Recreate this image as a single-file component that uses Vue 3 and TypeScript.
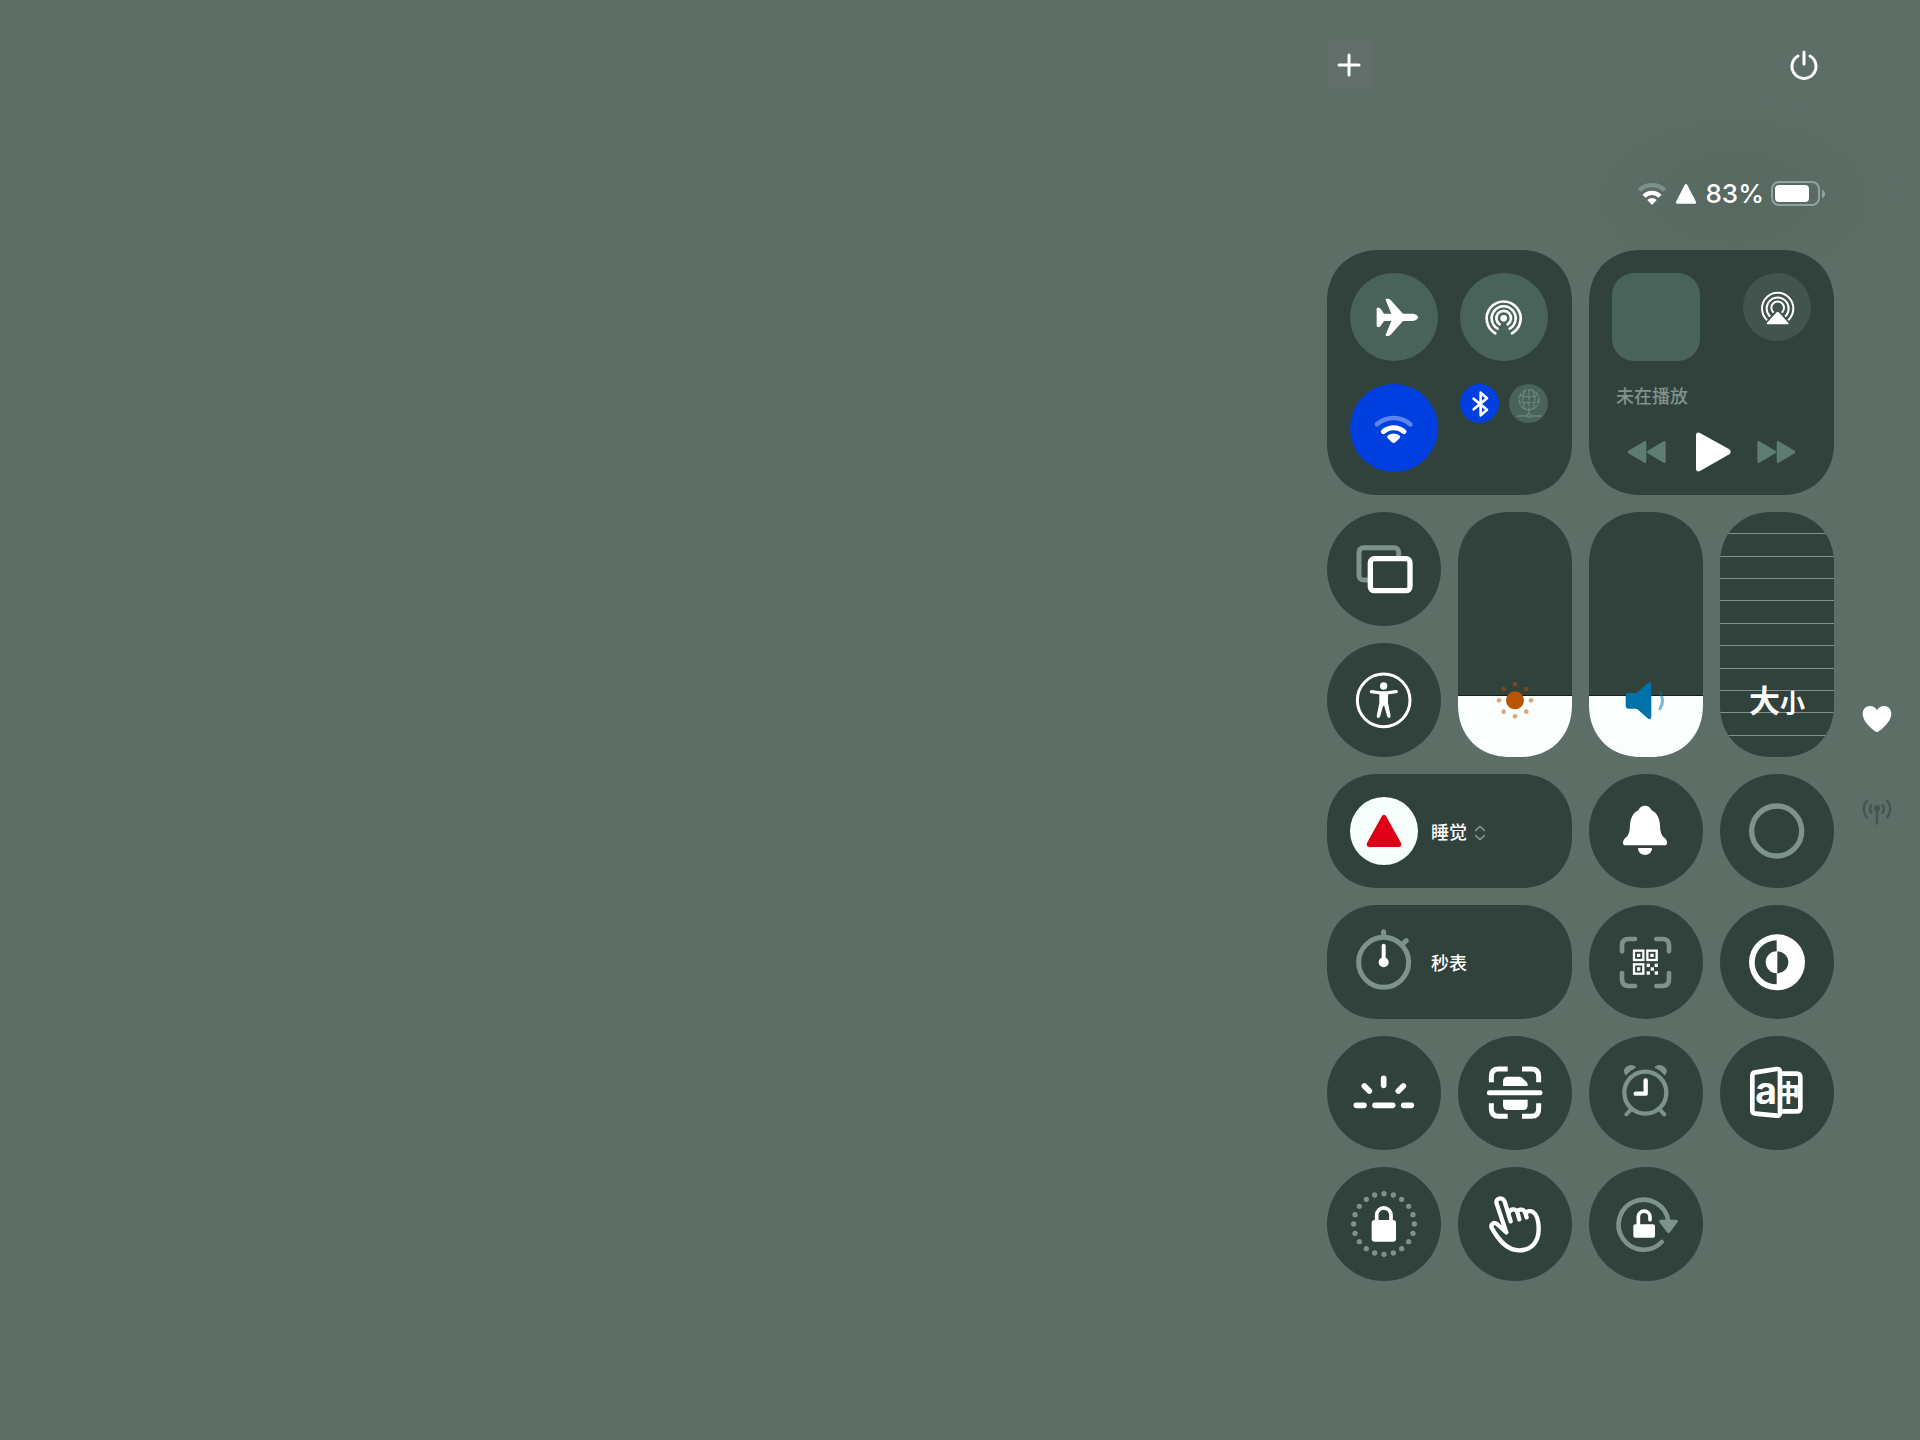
<script setup lang="ts">
import { reactive, ref } from 'vue'

interface Point {
  x: number
  y: number
}

const levels = reactive({ brightness: 25, volume: 25, textSize: 3 })
const playing = ref(false)

function ring(count: number, cx: number, cy: number, radius: number): Point[] {
  return Array.from({ length: count }, (_, i) => {
    const angle = (i / count) * Math.PI * 2
    return {
      x: Math.round(cx + Math.sin(angle) * radius),
      y: Math.round(cy - Math.cos(angle) * radius),
    }
  })
}

const sunRays = ring(8, 171, 565, 48)
const lockDots = ring(20, 171, 171, 91)
const qrPixels: Point[] = [
  { x: 173, y: 176 },
  { x: 197, y: 176 },
  { x: 185, y: 187 },
  { x: 173, y: 199 },
  { x: 197, y: 199 },
]
</script>

<template>
  <main class="screen">
    <section class="center" aria-label="控制中心">
      <header class="top">
        <button class="bar-button add" type="button" aria-label="添加控件">
          <svg width="26" height="26" viewBox="0 0 26 26"><path class="line" stroke-width="3" d="M13 3V23M3 13H23" /></svg>
        </button>
        <button class="bar-button" type="button" aria-label="关机">
          <svg width="32" height="32" viewBox="0 0 32 32">
            <path class="line" stroke-width="3" d="M10 7A12 12 0 1 0 22 7M16 3V15" />
          </svg>
        </button>
      </header>

      <div class="status">
        <svg width="30" height="24" viewBox="0 0 90 72">
          <path class="line dim" stroke-width="13" stroke-linecap="butt" d="M7 25A54 54 0 0 1 83 25" />
          <path class="line" stroke-width="13" stroke-linecap="butt" d="M21 43A33 33 0 0 1 69 43" />
          <path class="solid" d="M45 69L31 54A20 20 0 0 1 59 54Z" />
        </svg>
        <svg width="22" height="22" viewBox="0 0 66 66"><path class="solid join" d="M33 8L59 58H7Z" /></svg>
        <span class="percent">83%</span>
        <svg class="battery" width="54" height="26" viewBox="0 0 54 26">
          <rect class="line faint" x="1" y="1" width="47" height="23" rx="7" stroke-width="2" />
          <path class="faint-fill" d="M51 9Q54 10 54 13T51 17Z" />
          <rect class="solid" x="4" y="4" width="34" height="17" rx="4" />
        </svg>
      </div>

      <div class="grid">
        <div class="tile large connect">
          <button class="round" type="button" aria-label="飞行模式">
            <svg viewBox="0 0 264 264">
              <path class="solid" d="M186 122H159L122 81Q118 77 113 77H109Q106 77 107 81L124 122H102L92 107Q90 104 86 104H83Q80 104 80 108V158Q80 162 83 162H86Q90 162 92 159L102 144H124L107 185Q106 189 109 189H113Q118 189 122 185L159 144H186C196 144 204 139 204 133S196 122 186 122Z" />
            </svg>
          </button>
          <button class="round" type="button" aria-label="隔空投送">
            <svg viewBox="0 0 264 264">
              <circle class="solid" cx="131" cy="136" r="10" />
              <path class="line" stroke-width="8" d="M106 181A51 51 0 1 1 156 181M113 167A36 36 0 1 1 149 167M119 154A22 22 0 1 1 143 154" />
            </svg>
          </button>
          <button class="round on" type="button" aria-label="无线局域网" aria-pressed="true">
            <svg viewBox="0 0 264 264">
              <path class="line veil" stroke-width="14" d="M81 121A75 75 0 0 1 181 121" />
              <path class="line" stroke-width="15" d="M100 143A46 46 0 0 1 162 143" />
              <path class="solid" d="M131 177Q128 177 125 174L113 163Q109 158 114 154Q131 143 148 154Q153 158 149 163L137 174Q134 177 131 177Z" />
            </svg>
          </button>
          <div class="pair">
            <button class="small on" type="button" aria-label="蓝牙" aria-pressed="true">
              <svg viewBox="0 0 117 117"><path class="line" stroke-width="8" d="M41 44L81 77L62 94V26L81 43L41 76" /></svg>
            </button>
            <button class="small" type="button" aria-label="蜂窝网络">
              <svg viewBox="0 0 117 117">
                <g class="line dim" stroke-width="4">
                  <circle cx="60" cy="47" r="30" stroke-dasharray="13 7" />
                  <path stroke-dasharray="12 6" d="M60 18V78M48 20Q36 47 50 76M72 20Q84 47 70 76M34 34Q60 42 86 34M31 52Q60 60 89 52" />
                  <path d="M60 78V90M26 96H54M66 96H96" />
                  <circle cx="60" cy="95" r="5" />
                </g>
              </svg>
            </button>
          </div>
        </div>

        <div class="tile large media">
          <div class="media-top">
            <div class="art"></div>
            <button class="airplay" type="button" aria-label="隔空播放">
              <svg viewBox="0 0 204 204">
                <path class="line" stroke-width="6" d="M71 140A47 47 0 1 1 137 140M80 129A33 33 0 1 1 128 129M90 117A19 19 0 1 1 118 117" />
                <path class="mask" d="M104 108L149 158H59Z" />
                <path class="solid" d="M101 118Q104 114 107 118L136 149Q138 154 133 154H75Q70 154 72 149Z" />
              </svg>
            </button>
          </div>
          <p class="track">未在播放</p>
          <div class="transport">
            <button type="button" aria-label="后退">
              <svg width="39" height="24" viewBox="0 0 117 72">
                <path class="muted" d="M52 4Q58 1 58 8V64Q58 71 52 68L4 40Q0 36 4 32ZM110 4Q116 1 116 8V64Q116 71 110 68L62 40Q58 36 62 32Z" />
              </svg>
            </button>
            <button type="button" aria-label="播放" :aria-pressed="playing" @click="playing = !playing">
              <svg width="40" height="40" viewBox="0 0 120 120">
                <path class="solid" d="M12 12Q12 -2 24 3L112 52Q120 60 112 67L24 117Q12 122 12 109Z" />
              </svg>
            </button>
            <button type="button" aria-label="前进">
              <svg width="39" height="24" viewBox="0 0 117 72">
                <path class="muted" d="M7 4Q1 1 1 8V64Q1 71 7 68L55 40Q59 36 55 32ZM65 4Q59 1 59 8V64Q59 71 65 68L113 40Q117 36 113 32Z" />
              </svg>
            </button>
          </div>
        </div>

        <button class="tile" type="button" aria-label="屏幕镜像">
          <svg viewBox="0 0 342 342">
            <rect class="line dim" x="96" y="107" width="119" height="97" rx="13" stroke-width="15" />
            <rect class="line cover" x="130" y="140" width="119" height="96" rx="12" stroke-width="16" />
          </svg>
        </button>

        <label class="tile tall">
          <input v-model.number="levels.brightness" type="range" min="0" max="100" aria-label="亮度" />
          <span class="level" :style="{ height: levels.brightness + '%' }"></span>
          <svg viewBox="0 0 342 735">
            <circle class="sun" cx="171" cy="565" r="27" />
            <circle v-for="(p, i) in sunRays" :key="i" class="sun ray" :cx="p.x" :cy="p.y" r="7" />
          </svg>
        </label>

        <label class="tile tall">
          <input v-model.number="levels.volume" type="range" min="0" max="100" aria-label="音量" />
          <span class="level" :style="{ height: levels.volume + '%' }"></span>
          <svg viewBox="0 0 342 735">
            <path class="speaker" d="M120 543H139Q144 543 148 539L175 514Q187 505 187 519V613Q187 627 175 618L148 594Q144 590 139 590H120Q110 590 110 581V552Q110 543 120 543Z" />
            <path class="wave" d="M213 542Q228 566 213 590" />
          </svg>
        </label>

        <label class="tile tall">
          <input v-model.number="levels.textSize" type="range" min="0" max="10" aria-label="文字大小" />
          <span class="steps"><i v-for="n in 10" :key="n"></i></span>
          <span class="sizes"><b class="big">大</b><b class="little">小</b></span>
        </label>

        <button class="tile" type="button" aria-label="辅助功能">
          <svg viewBox="0 0 342 342">
            <circle class="line" cx="170" cy="172" r="79" stroke-width="9" />
            <circle class="solid" cx="170" cy="129" r="11" />
            <path class="solid" d="M134 141L160 145H180L206 141Q213 141 213 146Q213 150 208 151L185 154Q183 155 183 158V180L191 219Q191 225 187 225Q183 225 181 221L172 190Q170 186 168 190L159 221Q157 225 153 225Q149 225 149 219L157 180V158Q157 155 155 154L132 151Q128 150 128 146Q128 141 134 141Z" />
          </svg>
        </button>

        <button class="tile wide" type="button">
          <span class="badge">
            <svg viewBox="0 0 204 204"><path class="alert" d="M102 62L146 142H58Z" /></svg>
          </span>
          <span class="name">睡觉</span>
          <svg class="chevrons" width="12" height="16" viewBox="0 0 36 48">
            <path class="line dim" stroke-width="5" d="M5 16L18 4L31 16M5 32L18 44L31 32" />
          </svg>
        </button>

        <button class="tile" type="button" aria-label="静音模式">
          <svg viewBox="0 0 342 342">
            <path class="solid" d="M168 95C179 95 185 102 188 109C205 117 212 135 213 155C214 178 218 184 228 193C234 199 234 204 234 207Q234 214 226 214H110Q102 214 102 207C102 204 102 199 108 193C118 184 122 178 123 155C124 135 131 117 148 109C151 102 157 95 168 95Z" />
            <path class="solid" d="M150 222H186Q189 222 189 226C186 237 179 243 168 243S150 237 147 226Q147 222 150 222Z" />
          </svg>
        </button>

        <button class="tile" type="button" aria-label="录制">
          <svg viewBox="0 0 342 342"><circle class="line dim" cx="170" cy="171" r="75" stroke-width="16" /></svg>
        </button>

        <button class="tile wide" type="button">
          <svg class="lead" viewBox="0 0 342 342">
            <circle class="line dim" cx="170" cy="172" r="75" stroke-width="15" />
            <path class="line dim" stroke-width="15" d="M170 80V92M238 107L228 116" />
            <path class="line" stroke-width="12" d="M170 122V168" />
            <circle class="solid" cx="170" cy="172" r="15" />
          </svg>
          <span class="name">秒表</span>
        </button>

        <button class="tile" type="button" aria-label="扫描二维码">
          <svg viewBox="0 0 342 342">
            <path class="line dim" stroke-width="14" d="M99 139V122Q99 102 119 102H138M202 102H220Q240 102 240 122V139M240 204V223Q240 243 220 243H202M138 243H119Q99 243 99 223V204" />
            <g class="line" stroke-width="7" stroke-linejoin="miter">
              <rect x="135" y="137" width="28" height="28" />
              <rect x="175" y="137" width="28" height="28" />
              <rect x="135" y="178" width="28" height="28" />
            </g>
            <path class="solid" d="M144 146h10v10h-10zM184 146h10v10h-10zM144 187h10v10h-10z" />
            <rect v-for="(p, i) in qrPixels" :key="i" class="solid" :x="p.x" :y="p.y" width="10" height="10" />
          </svg>
        </button>

        <button class="tile" type="button" aria-label="深色模式">
          <svg viewBox="0 0 342 342">
            <path class="solid" fill-rule="evenodd" d="M171 88A84 84 0 0 1 171 256A84 84 0 0 1 171 88ZM170 106A66 66 0 0 0 170 238V205A33 33 0 0 1 170 139ZM172 139A33 33 0 0 1 172 205Z" />
          </svg>
        </button>

        <button class="tile" type="button" aria-label="键盘亮度">
          <svg viewBox="0 0 342 342">
            <path class="line" stroke-width="17" d="M170 127V148M112 150L127 165M229 150L214 165M88 208H111M144 208H197M230 208H253" />
          </svg>
        </button>

        <button class="tile" type="button" aria-label="扫描文稿">
          <svg viewBox="0 0 342 342">
            <path class="line" stroke-width="15" stroke-linecap="butt" d="M100 139V121Q100 99 122 99H149M192 99H220Q242 99 242 121V139M242 202V219Q242 241 220 241H192M149 241H122Q100 241 100 219V202" />
            <path class="line" stroke-width="15" d="M94 170H246" />
            <path class="solid" d="M135 150V136Q135 122 149 122H183Q189 122 193 126L206 138Q209 141 209 146V150ZM135 191H209V208Q209 222 195 222H149Q135 222 135 208Z" />
          </svg>
        </button>

        <button class="tile" type="button" aria-label="闹钟">
          <svg viewBox="0 0 342 342">
            <circle class="line dim" cx="169" cy="170" r="63" stroke-width="13" />
            <path class="line dim" stroke-width="12" d="M126 220L112 235M212 220L226 235" />
            <path class="dim-fill" d="M109 117Q102 109 105 102Q112 87 128 87Q136 87 140 92Q142 95 138 97Q123 104 113 116Q111 119 109 117ZM229 117Q236 109 233 102Q226 87 210 87Q202 87 198 92Q196 95 200 97Q215 104 225 116Q227 119 229 117Z" />
            <path class="line" stroke-width="13" d="M170 133V173H140" />
          </svg>
        </button>

        <button class="tile" type="button" aria-label="翻译">
          <svg viewBox="0 0 342 342">
            <path class="line" stroke-width="14" d="M187 113H230Q241 113 241 124V215Q241 226 230 226H187" />
            <text class="glyph" x="205" y="196" font-size="68">中</text>
            <path class="line cover" stroke-width="14" d="M106 109L170 99Q180 98 180 107V231Q180 240 170 239L106 233Q97 232 97 223V119Q97 110 106 109Z" />
            <text class="glyph latin" x="138" y="203" font-size="112">a</text>
          </svg>
        </button>

        <button class="tile" type="button" aria-label="引导式访问">
          <svg viewBox="0 0 342 342">
            <circle v-for="(p, i) in lockDots" :key="i" class="dim-fill" :cx="p.x" :cy="p.y" r="8" />
            <rect class="solid" x="134" y="159" width="73" height="65" rx="9" />
            <path class="line" stroke-width="11" d="M149 164V144A21 21 0 0 1 192 144V164" />
          </svg>
        </button>

        <button class="tile" type="button" aria-label="辅助触控">
          <svg viewBox="0 0 342 342">
            <path class="line" stroke-width="13" d="M145 196L117 171C107 163 96 174 102 184C118 212 143 250 184 250C220 250 242 225 242 187C242 162 236 142 225 135C217 130 206 132 203 140M145 196L116 110C111 93 134 88 140 104L158 163M153 136C160 122 176 126 179 139L184 157M178 134C184 124 198 127 202 138L206 151" />
          </svg>
        </button>

        <button class="tile" type="button" aria-label="方向锁定">
          <svg viewBox="0 0 342 342">
            <path class="line dim" stroke-width="14" d="M238 162A75 75 0 1 0 218 225" />
            <path class="dim-fill" d="M215 158H262Q269 160 266 165L243 196Q238 201 234 196L211 165Q208 160 215 158Z" />
            <rect class="solid" x="133" y="172" width="65" height="40" rx="6" />
            <path class="line" stroke-width="11" d="M148 176V150A17 17 0 0 1 183 150V158" />
          </svg>
        </button>
      </div>
    </section>

    <nav class="pages" aria-label="页面">
      <button type="button" aria-label="个人收藏">
        <svg width="30" height="28" viewBox="0 0 90 84">
          <path class="solid" d="M45 81C41 81 2 53 2 26C2 12 12 3 24 3C34 3 41 8 45 16C49 8 56 3 66 3C78 3 88 12 88 26C88 53 49 81 45 81Z" />
        </svg>
      </button>
      <button type="button" aria-label="连接">
        <svg width="30" height="26" viewBox="0 0 90 78">
          <circle class="ink-fill" cx="45" cy="28" r="9" />
          <path class="ink" d="M45 32V74M28 18Q20 29 28 41M62 18Q70 29 62 41M14 5Q-4 29 14 55M76 5Q94 29 76 55" />
        </svg>
      </button>
    </nav>
  </main>
</template>

<style>
body {
  margin: 0;
  background: #5d6e67;
}
</style>

<style scoped>
.screen {
  --tile: #31423c;
  --dim: #7c928a;
  --cell: 114px;
  box-sizing: border-box;
  min-height: 100vh;
  display: flex;
  justify-content: flex-end;
  padding-top: 41px;
  background: #5d6e67;
  color: #fff;
  font-family: Inter, "Noto Sans CJK SC", sans-serif;
}

button {
  display: flex;
  align-items: center;
  justify-content: center;
  padding: 0;
  border: 0;
  background: none;
  color: inherit;
  font: inherit;
  cursor: pointer;
}

svg {
  display: block;
  flex: none;
}

.solid { fill: #fff; }
.line {
  fill: none;
  stroke: #fff;
  stroke-linecap: round;
  stroke-linejoin: round;
}
.line[stroke-linecap="butt"] { stroke-linecap: butt; }
.line[stroke-linejoin="miter"] { stroke-linejoin: miter; }
.line.dim { stroke: var(--dim); }
.line.veil { stroke: #5c85ee; }
.line.faint { stroke: #93a19c; }
.line.cover { fill: var(--tile); }
.faint-fill { fill: #93a19c; }
.dim-fill { fill: var(--dim); }
.muted { fill: #5f7c72; }
.join {
  stroke: #fff;
  stroke-width: 9;
  stroke-linejoin: round;
}

.top {
  display: flex;
  justify-content: space-between;
  padding-right: 6px;
}
.bar-button {
  width: 48px;
  height: 48px;
}
.bar-button.add {
  width: 44px;
  background: #626f6a;
}

.status {
  display: flex;
  align-items: center;
  justify-content: flex-end;
  height: 32px;
  margin-top: 89px;
  padding-right: 9px;
  position: relative;
}
.status::before {
  content: "";
  position: absolute;
  right: -70px;
  top: -80px;
  width: 340px;
  height: 200px;
  background: radial-gradient(closest-side, #52635c88, #5d6e6700);
}
.status > * { position: relative; }
.percent {
  margin-left: 9px;
  font-size: 26px;
  line-height: 32px;
  font-weight: 500;
}
.status svg + svg { margin-left: 8px; }
.status .battery { margin-left: 7px; }

.grid {
  display: grid;
  grid-template-columns: repeat(4, var(--cell));
  grid-auto-rows: var(--cell);
  gap: 17px;
  margin-top: 40px;
  position: relative;
}

.tile {
  border-radius: 57px;
  background: var(--tile);
}
.tile > svg {
  width: 114px;
  height: 114px;
}
.large {
  grid-column: span 2;
  grid-row: span 2;
  box-sizing: border-box;
  padding: 23px;
}
.large, .wide, .tall { border-radius: 48px; }
@supports (corner-shape: superellipse(1.1)) {
  .large, .wide, .tall {
    border-radius: 52px;
    corner-shape: superellipse(1.1);
  }
}

.connect {
  display: grid;
  grid-template-columns: 88px 88px;
  gap: 22px;
}
.round {
  height: 88px;
  border-radius: 50%;
  background: #4a635a;
}
.round svg {
  width: 88px;
  height: 88px;
}
.pair {
  display: flex;
  justify-content: space-between;
  align-items: flex-start;
}
.small {
  width: 39px;
  height: 39px;
  border-radius: 50%;
  background: #4a635a;
}
.small svg {
  width: 39px;
  height: 39px;
}
.small .dim { opacity: 0.7; }
.round.on, .small.on { background: #003fe0; }

.media-top {
  display: flex;
  align-items: flex-start;
  justify-content: space-between;
}
.art {
  width: 88px;
  height: 88px;
  border-radius: 22px;
  background: #4a635a;
}
.airplay {
  width: 68px;
  height: 68px;
  border-radius: 50%;
  background: #43534e;
}
.airplay svg {
  width: 68px;
  height: 68px;
}
.mask { fill: #43534e; }
.track {
  margin: 24px 0 0;
  padding-left: 4px;
  color: #82928c;
  font-size: 18px;
  line-height: 24px;
  font-weight: 500;
}
.transport {
  display: flex;
  align-items: center;
  justify-content: space-between;
  height: 40px;
  margin-top: 23px;
  padding: 0 15px;
}

.tall {
  grid-row: span 2;
  position: relative;
  overflow: hidden;
}
.tall input {
  appearance: none;
  position: absolute;
  inset: 0;
  width: 100%;
  height: 100%;
  margin: 0;
  background: transparent;
  writing-mode: vertical-lr;
  direction: rtl;
  cursor: pointer;
}
.tall input::-webkit-slider-thumb {
  appearance: none;
  width: 1px;
  height: 1px;
  background: transparent;
}
.tall > svg, .tall > span {
  position: absolute;
  left: 0;
  bottom: 0;
  width: 100%;
  pointer-events: none;
}
.tall > svg { height: 100%; }
.level {
  border-top: 1px solid #10201a;
  background: #fafffd;
}
.sun { fill: #b95400; }
.ray { opacity: 0.5; }
.speaker { fill: #0071a9; }
.wave {
  fill: none;
  stroke: #0071a9;
  stroke-width: 9;
  stroke-linecap: round;
  opacity: 0.5;
}
.steps {
  top: 0;
  display: flex;
  flex-direction: column;
  justify-content: space-evenly;
}
.steps i {
  height: 1px;
  background: #7c928a;
}
.tall > .sizes {
  bottom: 36px;
  display: flex;
  align-items: baseline;
  justify-content: center;
  line-height: 40px;
  font-family: "Noto Sans CJK SC", sans-serif;
}
.big { font-size: 31px; }
.little { font-size: 25px; }

.wide {
  grid-column: span 2;
  justify-content: flex-start;
}
.badge {
  width: 68px;
  height: 68px;
  margin: 0 13px 0 23px;
  border-radius: 50%;
  background: #f7fffc;
}
.badge svg {
  width: 68px;
  height: 68px;
}
.alert {
  fill: #de0016;
  stroke: #de0016;
  stroke-width: 16;
  stroke-linejoin: round;
}
.wide > .lead { margin-right: -10px; }
.name {
  padding-top: 3px;
  font-size: 18px;
  line-height: 24px;
  font-weight: 500;
}
.wide > .chevrons {
  width: 12px;
  height: 16px;
  margin: 3px 0 0 7px;
}
.glyph {
  fill: #fff;
  text-anchor: middle;
  font-family: "Noto Sans CJK SC", sans-serif;
  font-weight: 900;
}
.glyph.latin {
  font-family: Inter, sans-serif;
  font-weight: 700;
}

.pages {
  display: flex;
  flex-direction: column;
  align-items: center;
  justify-content: center;
  gap: 49px;
  align-self: flex-start;
  width: 86px;
  height: 1031px;
  margin-top: 209px;
}
.pages button {
  width: 44px;
  height: 44px;
}
.ink {
  fill: none;
  stroke: #44544e;
  stroke-width: 7;
  stroke-linecap: round;
}
.ink-fill { fill: #44544e; }
</style>
